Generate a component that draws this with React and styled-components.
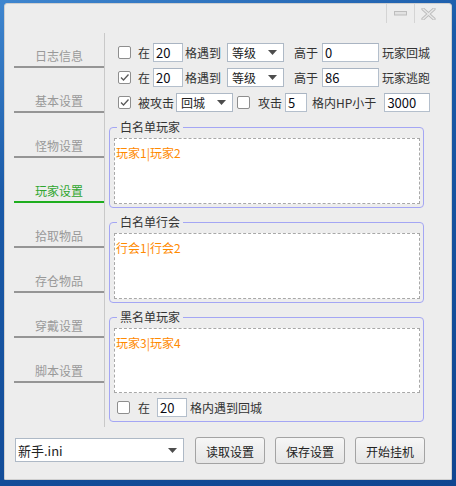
import React from 'react';
import styled, { createGlobalStyle } from 'styled-components';

const GlobalStyle = createGlobalStyle`
  html, body {
    margin: 0;
    padding: 0;
  }
  body {
    font-family: "Noto Sans CJK SC", "Liberation Sans", sans-serif;
    font-size: 12px;
  }
`;

const Desktop = styled.div`
  width: 456px;
  height: 486px;
  box-sizing: border-box;
  padding: 3px 0 0 4px;
  background: linear-gradient(160deg, #3f86cf 0%, #1a5aa8 30%, #0f4590 100%);
`;

const Window = styled.div`
  width: 448px;
  height: 477px;
  box-sizing: border-box;
  background: #ededed;
  border: 1px solid #cfcfcf;
  border-radius: 3px 3px 1px 1px;
  display: flex;
  flex-direction: column;
`;

const TitleBar = styled.div`
  height: 29px;
  display: flex;
  justify-content: flex-end;
  align-items: flex-start;
  padding-right: 9px;
`;

const TitleButton = styled.div`
  width: 27px;
  height: 19px;
  border-left: 1px solid #d4d4d4;
  display: flex;
  align-items: center;
  justify-content: center;
`;

const Main = styled.div`
  height: 394px;
  display: flex;
`;

const Nav = styled.div`
  width: 100px;
  box-sizing: border-box;
  border-right: 1px solid #c9c9c9;
  display: flex;
  flex-direction: column;
  gap: 10px;
  padding-left: 9px;
`;

const NavItem = styled.div`
  width: 90px;
  height: 35px;
  box-sizing: border-box;
  padding-top: 15px;
  line-height: 16px;
  text-align: center;
  color: ${(p) => (p.$active ? '#2fa52f' : '#999999')};
  border-bottom: 2px solid ${(p) => (p.$active ? '#1fae1f' : '#959595')};
`;

const Content = styled.div`
  flex: 1;
  padding: 10px 0 0 4px;
  display: flex;
  flex-direction: column;
`;

const Rows = styled.div`
  display: flex;
  flex-direction: column;
  gap: 6px;
  padding-left: 9px;
  margin-bottom: 7px;
`;

const Row = styled.div`
  height: 19px;
  display: flex;
  align-items: center;
  color: #333333;
  white-space: nowrap;
`;

const Label = styled.span`
  margin-left: ${(p) => p.$ml ?? 0}px;
  line-height: 16px;
`;

const Box = styled.span`
  width: 13px;
  height: 13px;
  box-sizing: border-box;
  margin-left: ${(p) => p.$ml ?? 0}px;
  background: #ffffff;
  border: 1px solid #8e8e8e;
  border-radius: 2px;
  display: flex;
  align-items: center;
  justify-content: center;
`;

const NumInput = styled.div`
  width: ${(p) => p.$w}px;
  height: 19px;
  box-sizing: border-box;
  margin-left: ${(p) => p.$ml ?? 0}px;
  background: #ffffff;
  border: 1px solid #b4bfcc;
  border-top-color: #a9b4c2;
  padding: 0 2px;
  line-height: 17px;
  font-size: 13px;
  color: #0a0a14;
`;

const Select = styled.div`
  width: ${(p) => p.$w}px;
  height: ${(p) => p.$h ?? 19}px;
  box-sizing: border-box;
  margin-left: ${(p) => p.$ml ?? 0}px;
  background: #ffffff;
  border: 1px solid #aeb9c6;
  display: flex;
  align-items: center;
  justify-content: space-between;
  padding: 0 6px 0 ${(p) => p.$pl ?? 4}px;
  color: #222222;
  font-size: ${(p) => p.$fs ?? 12}px;
`;

const Group = styled.fieldset`
  margin: ${(p) => p.$mt ?? 0}px 0 0 0;
  width: 315px;
  box-sizing: border-box;
  min-width: 0;
  padding: 0 3px ${(p) => p.$pb ?? 3}px 4px;
  border: 1px solid #a4a6f4;
  border-radius: 4px;
`;

const Legend = styled.legend`
  margin-left: 3px;
  padding: 0 3px;
  line-height: 16px;
  color: #333333;
`;

const ListBox = styled.div`
  margin-top: 3px;
  height: ${(p) => p.$h}px;
  box-sizing: border-box;
  background: #ffffff;
  border: 1px dashed #a8a8a8;
  padding: 6px 1px;
  line-height: 16px;
  color: #ff8a00;
`;

const GroupRow = styled(Row)`
  margin-top: 5px;
  padding-left: 3px;
`;

const Footer = styled.div`
  flex: 1;
  display: flex;
  align-items: flex-start;
  padding: 10px 0 0 10px;
`;

const FileSelect = styled(Select)`
  margin-top: 1px;
`;

const Button = styled.button`
  width: 70px;
  height: 27px;
  margin-left: ${(p) => p.$ml}px;
  box-sizing: border-box;
  border: 1px solid #a3a3a3;
  border-radius: 3px;
  background: linear-gradient(#f6f6f6, #e6e6e6);
  font-family: inherit;
  font-size: 12px;
  color: #222222;
  padding: 0;
  padding-top: 1px;
`;

const Arrow = () => (
  <svg width="9" height="5" viewBox="0 0 9 5">
    <path d="M0 0 L9 0 L4.5 5 Z" fill="#4d4d4d" />
  </svg>
);

const Check = ({ on, ml }) => (
  <Box $ml={ml}>
    {on && (
      <svg width="11" height="11" viewBox="0 0 11 11">
        <path d="M2 5.5 L4.5 8 L9.5 2.5" fill="none" stroke="#5a5a5a" strokeWidth="1.3" />
      </svg>
    )}
  </Box>
);

const navItems = ['日志信息', '基本设置', '怪物设置', '玩家设置', '拾取物品', '存仓物品', '穿戴设置', '脚本设置'];

const App = () => {
  return (
    <Desktop>
      <GlobalStyle />
      <Window>
        <TitleBar>
          <TitleButton>
            <svg width="13" height="5" viewBox="0 0 13 5">
              <rect x="0.5" y="0.5" width="12" height="3.5" fill="#e2e2e2" stroke="#bdbdbd" />
            </svg>
          </TitleButton>
          <TitleButton>
            <svg width="15" height="12" viewBox="0 0 15 12">
              <path d="M2 1 L13 11 M13 1 L2 11" stroke="#bcbcbc" strokeWidth="3.2" strokeLinecap="round" />
              <path d="M2 1 L13 11 M13 1 L2 11" stroke="#e8e8e8" strokeWidth="1.4" strokeLinecap="round" />
            </svg>
          </TitleButton>
        </TitleBar>
        <Main>
          <Nav>
            {navItems.map((t) => (
              <NavItem key={t} $active={t === '玩家设置'}>
                {t}
              </NavItem>
            ))}
          </Nav>
          <Content>
            <Rows>
              <Row>
                <Check />
                <Label $ml={7}>在</Label>
                <NumInput $w={30} $ml={3}>20</NumInput>
                <Label $ml={2}>格遇到</Label>
                <Select $w={57} $ml={6}>
                  等级 <Arrow />
                </Select>
                <Label $ml={10}>高于</Label>
                <NumInput $w={57} $ml={4}>0</NumInput>
                <Label $ml={3}>玩家回城</Label>
              </Row>
              <Row>
                <Check on />
                <Label $ml={7}>在</Label>
                <NumInput $w={30} $ml={3}>20</NumInput>
                <Label $ml={2}>格遇到</Label>
                <Select $w={57} $ml={6}>
                  等级 <Arrow />
                </Select>
                <Label $ml={10}>高于</Label>
                <NumInput $w={57} $ml={4}>86</NumInput>
                <Label $ml={3}>玩家逃跑</Label>
              </Row>
              <Row>
                <Check on />
                <Label $ml={7}>被攻击</Label>
                <Select $w={57} $ml={2}>
                  回城 <Arrow />
                </Select>
                <Check ml={4} />
                <Label $ml={8}>攻击</Label>
                <NumInput $w={22} $ml={3}>5</NumInput>
                <Label $ml={5}>格内HP小于</Label>
                <NumInput $w={46} $ml={8}>3000</NumInput>
              </Row>
            </Rows>
            <Group>
              <Legend>白名单玩家</Legend>
              <ListBox $h={66}>玩家1|玩家2</ListBox>
            </Group>
            <Group $mt={6}>
              <Legend>白名单行会</Legend>
              <ListBox $h={66}>行会1|行会2</ListBox>
            </Group>
            <Group $mt={6} $pb={4}>
              <Legend>黑名单玩家</Legend>
              <ListBox $h={65}>玩家3|玩家4</ListBox>
              <GroupRow>
                <Check />
                <Label $ml={8}>在</Label>
                <NumInput $w={30} $ml={7}>20</NumInput>
                <Label $ml={3}>格内遇到回城</Label>
              </GroupRow>
            </Group>
          </Content>
        </Main>
        <Footer>
          <FileSelect $w={169} $h={24} $pl={2} $fs={13}>
            新手.ini <Arrow />
          </FileSelect>
          <Button $ml={11}>读取设置</Button>
          <Button $ml={10}>保存设置</Button>
          <Button $ml={10}>开始挂机</Button>
        </Footer>
      </Window>
    </Desktop>
  );
};

export default App;
